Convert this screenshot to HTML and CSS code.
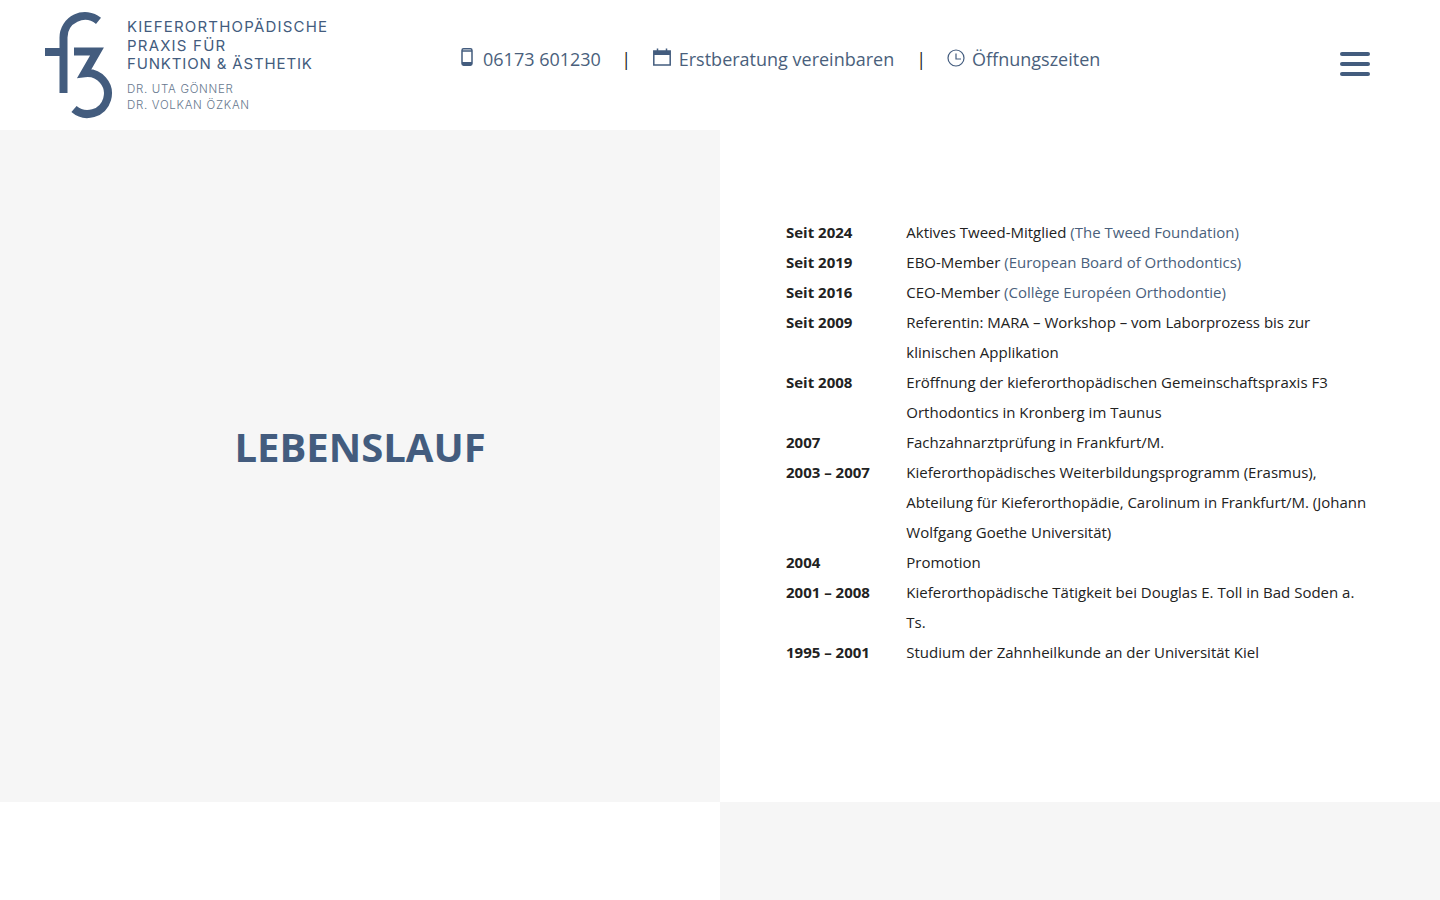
FILE: index.html
```html
<!DOCTYPE html>
<html lang="de">
  <head>
    <meta charset="UTF-8" />
    <meta name="viewport" content="width=device-width, initial-scale=1.0" />
    <title>Lebenslauf</title>
    <link rel="stylesheet" href="styles.css">
  </head>
  <body>
    <!-- Kopfzeile -->
    <header class="header">
      <a class="logo" href="#">
        <svg class="logo-mark" viewBox="45 11 68 108" width="68" height="108" aria-hidden="true">
          <path d="M63.5 93V37.5A21.5 21.5 0 0 1 98.5 20.8" />
          <path d="M45 52H63.5" />
          <path d="M74 51.5H97L84.5 73.2A20.5 20.5 0 1 1 74 109" />
        </svg>
        <div class="logo-text">
          <div class="logo-title">KIEFERORTHOPÄDISCHE<br>PRAXIS FÜR<br><span class="logo-line3">FUNKTION &amp; ÄSTHETIK</span></div>
          <div class="logo-names">DR. UTA GÖNNER<br>DR. VOLKAN ÖZKAN</div>
        </div>
      </a>

      <nav class="topnav">
        <a class="topnav-item" href="#">
          <svg class="icon-phone" viewBox="0 0 12 18" width="12" height="18" aria-hidden="true">
            <rect x="1" y="0.8" width="10" height="16.4" rx="1.6" />
            <path d="M1 14H11V15.6A1.6 1.6 0 0 1 9.4 17.2H2.6A1.6 1.6 0 0 1 1 15.6Z" class="solid" />
            <path d="M1 3H11" />
          </svg>
          06173 601230
        </a>
        <span class="sep">|</span>
        <a class="topnav-item" href="#">
          <svg class="icon-cal" viewBox="0 0 18 18" width="18" height="18" aria-hidden="true">
            <rect x="0.8" y="3" width="16.4" height="14" />
            <path d="M1 3H17V7H1Z" class="solid" />
            <path d="M4.5 0.5V4M13.5 0.5V4" />
          </svg>
          Erstberatung vereinbaren
        </a>
        <span class="sep sep-b">|</span>
        <a class="topnav-item" href="#">
          <svg class="icon-clock" viewBox="0 0 18 18" width="18" height="18" aria-hidden="true">
            <circle cx="9" cy="9" r="8" />
            <path d="M9 4.5V10H14" />
          </svg>
          Öffnungszeiten
        </a>
      </nav>

      <button class="burger" aria-label="Menü">
        <span></span>
        <span></span>
        <span></span>
      </button>
    </header>

    <!-- Lebenslauf -->
    <section class="split">
      <div class="split-title">
        <h1>LEBENSLAUF</h1>
      </div>
      <div class="split-content">
        <div class="cv">
          <div class="cv-year">Seit 2024</div>
          <div>Aktives Tweed-Mitglied <span class="hl">(The Tweed Foundation)</span></div>
          <div class="cv-year">Seit 2019</div>
          <div>EBO-Member <span class="hl">(European Board of Orthodontics)</span></div>
          <div class="cv-year">Seit 2016</div>
          <div>CEO-Member <span class="hl">(Collège Européen Orthodontie)</span></div>
          <div class="cv-year">Seit 2009</div>
          <div>Referentin: MARA – Workshop – vom Laborprozess bis zur klinischen Applikation</div>
          <div class="cv-year">Seit 2008</div>
          <div>Eröffnung der kieferorthopädischen Gemeinschaftspraxis F3 Orthodontics in Kronberg im Taunus</div>
          <div class="cv-year">2007</div>
          <div>Fachzahnarztprüfung in Frankfurt/M.</div>
          <div class="cv-year">2003 – 2007</div>
          <div>Kieferorthopädisches Weiterbildungsprogramm (Erasmus), Abteilung für Kieferorthopädie, Carolinum in Frankfurt/M. (Johann Wolfgang Goethe Universität)</div>
          <div class="cv-year">2004</div>
          <div>Promotion</div>
          <div class="cv-year">2001 – 2008</div>
          <div>Kieferorthopädische Tätigkeit bei Douglas E. Toll in Bad Soden a. Ts.</div>
          <div class="cv-year">1995 – 2001</div>
          <div>Studium der Zahnheilkunde an der Universität Kiel</div>
        </div>
      </div>
    </section>

    <section class="split split-next">
      <div></div>
      <div class="split-grey"></div>
    </section>
  </body>
</html>
```

FILE: styles.css
```css
body {
  margin: 0;
  font-family: "Open Sans", "Liberation Sans", sans-serif;
  color: #222;
  background: #fff;
  overflow: hidden;
}
a {
  color: inherit;
  text-decoration: none;
}
.header {
  display: flex;
  align-items: center;
  height: 130px;
  padding: 0 70px 0 45px;
}
.logo {
  display: flex;
  align-items: flex-start;
  width: 416px;
  height: 108px;
  flex-shrink: 0;
  color: #435c7e;
}
.logo-mark {
  display: block;
  flex-shrink: 0;
  fill: none;
  stroke: #435c7e;
  stroke-width: 8;
}
.logo-text {
  margin-left: 14px;
  font-family: Inter, "Liberation Sans", sans-serif;
}
.logo-title {
  margin-top: 7px;
  font-size: 15px;
  line-height: 18.5px;
  letter-spacing: 1.2px;
}
.logo-line3 {
  letter-spacing: 0.85px;
}
.logo-names {
  margin-top: 7px;
  font-size: 11.5px;
  font-weight: 300;
  line-height: 16px;
  letter-spacing: 0.7px;
  color: #67788e;
}
.topnav {
  display: flex;
  align-items: center;
  margin-bottom: 13px;
  font-size: 18px;
  line-height: 24px;
  color: #4a5f7c;
}
.topnav-item {
  display: flex;
  align-items: center;
}
.topnav svg {
  display: block;
  fill: none;
  stroke: #435c7e;
  stroke-width: 1.5;
  margin-right: 8px;
  margin-top: -3px;
}
.topnav svg .solid {
  fill: #435c7e;
  stroke: none;
}
.topnav .icon-phone {
  margin-right: 10px;
}
.topnav .icon-clock {
  margin-top: -1px;
  margin-right: 7px;
  stroke-width: 1.2;
}
.sep {
  margin: 0 21.7px 0 20.3px;
  color: #222;
}
.sep-b {
  margin: 0 21px 0 22px;
}
.burger {
  display: flex;
  flex-direction: column;
  gap: 6px;
  width: 30px;
  margin-left: auto;
  margin-bottom: 2px;
  padding: 0;
  border: 0;
  background: none;
}
.burger span {
  display: block;
  height: 4px;
  border-radius: 2px;
  background: #435c7e;
}
.split {
  display: grid;
  grid-template-columns: 720px 720px;
}
.split-title {
  display: flex;
  align-items: center;
  justify-content: center;
  height: 672px;
  background: #f6f6f6;
}
.split-title h1 {
  margin: 0 0 38px;
  font-size: 40px;
  line-height: 54px;
  font-weight: 700;
  color: #435c7e;
}
.split-content {
  height: 672px;
  box-sizing: border-box;
  padding: 87px 70px 0 66px;
}
.cv {
  display: grid;
  grid-template-columns: 120.3px 1fr;
  font-size: 15px;
  line-height: 30px;
}
.cv-year {
  font-weight: 700;
}
.hl {
  color: #4a5f7c;
}
.split-next {
  height: 98px;
}
.split-grey {
  background: #f6f6f6;
}
```
